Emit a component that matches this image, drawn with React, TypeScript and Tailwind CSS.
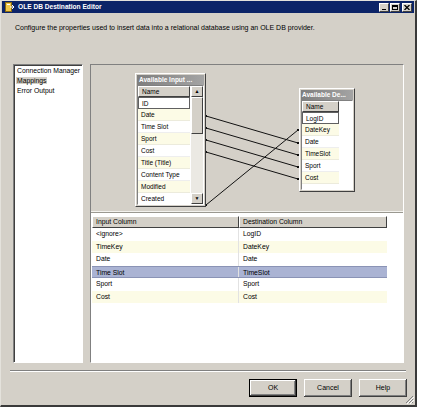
import React from "react";

const inputRows = ["ID", "Date", "Time Slot", "Sport", "Cost", "Title (Title)", "Content Type", "Modified", "Created"];
const destRows = ["LogID", "DateKey", "Date", "TimeSlot", "Sport", "Cost"];
const mappings = [
  ["<ignore>", "LogID"],
  ["TimeKey", "DateKey"],
  ["Date", "Date"],
  ["Time Slot", "TimeSlot"],
  ["Sport", "Sport"],
  ["Cost", "Cost"],
];

// lines in diagram coordinates
const links = [
  [115, 51, 207, 78],
  [115, 63, 207, 90],
  [115, 75, 207, 102],
  [115, 87, 207, 114],
  [115, 140, 207, 65],
];

const raised = "border border-t-white border-l-white border-r-[#404040] border-b-[#404040]";
const sunken = "border border-t-[#808080] border-l-[#808080] border-r-white border-b-white";

function WinButton({ label, isDefault }: { label: string; isDefault?: boolean }) {
  return (
    <div
      className={`flex h-[18px] w-[48px] items-center justify-center bg-[#d4d0c8] text-[7px] text-black ${
        isDefault ? "border border-black" : ""
      } shadow-[inset_-1px_-1px_#404040,inset_1px_1px_#ffffff,inset_-2px_-2px_#808080]`}
    >
      {label}
    </div>
  );
}

function ColumnRows({ rows, width }: { rows: string[]; width: number }) {
  return (
    <div className="flex flex-col" style={{ width }}>
      <div className={`h-[11px] shrink-0 bg-[#d4d0c8] pl-[3px] text-[6.5px] leading-[9px] ${raised}`}>Name</div>
      {rows.map((r, i) => (
        <div
          key={r}
          className={`h-[12px] shrink-0 whitespace-nowrap pl-[3px] text-[6.5px] leading-[11px] ${
            i === 0
              ? "border border-[#606060] bg-white"
              : i % 2 === 1
              ? "border-b border-[#ecebdc] bg-[#fcfbe6]"
              : "border-b border-[#eeeeee] bg-white"
          }`}
        >
          {r}
        </div>
      ))}
    </div>
  );
}

function Diagram() {
  return (
    <div className="relative h-[146px] shrink-0 bg-[#d4d0c8]">
      <svg className="absolute left-0 top-0" width="312" height="146">
        {links.map(([x1, y1, x2, y2], i) => (
          <g key={i}>
            <line x1={x1} y1={y1} x2={x2} y2={y2} stroke="#111" strokeWidth="1" />
            <rect x={x1 - 1} y={y1 - 1} width="2" height="2" fill="#111" />
            <rect x={x2 - 1} y={y2 - 1} width="2" height="2" fill="#111" />
          </g>
        ))}
      </svg>

      {/* Available Input Columns */}
      <div className={`absolute left-[44px] top-[8px] flex h-[134px] w-[71px] flex-col bg-[#d4d0c8] p-[1px] ${raised}`}>
        <div className="h-[10px] shrink-0 truncate bg-gradient-to-r from-[#7e7e7e] to-[#a4a4a4] pl-[2px] text-[6.5px] font-bold leading-[10px] text-white">
          Available Input ...
        </div>
        <div className={`flex min-h-0 flex-1 gap-[1px] overflow-hidden bg-white ${sunken}`}>
          <ColumnRows rows={inputRows} width={52} />
          <div className="flex w-[12px] flex-col bg-[#ebe9e3]">
            <div className={`flex h-[11px] items-center justify-center bg-[#d4d0c8] text-[5px] ${raised}`}>▲</div>
            <div className={`h-[37px] bg-[#d4d0c8] ${raised}`} />
            <div className="flex-1" />
            <div className={`flex h-[11px] items-center justify-center bg-[#d4d0c8] text-[5px] ${raised}`}>▼</div>
          </div>
        </div>
      </div>

      {/* Available Destination Columns */}
      <div className={`absolute left-[208px] top-[23px] flex h-[104px] w-[56px] flex-col bg-[#d4d0c8] p-[1px] ${raised}`}>
        <div className="h-[10px] shrink-0 truncate bg-gradient-to-r from-[#7e7e7e] to-[#a4a4a4] pl-[1px] text-[6.5px] font-bold leading-[10px] text-white">
          Available De...
        </div>
        <div className={`flex min-h-0 flex-1 overflow-hidden bg-white ${sunken}`}>
          <ColumnRows rows={destRows} width={37} />
        </div>
      </div>
    </div>
  );
}

function MappingTable() {
  return (
    <div className="flex-1 bg-white pl-[1px] pt-[3px]">
      <div className="flex">
        <div className={`h-[12px] w-[147px] bg-[#d4d0c8] pl-[3px] text-[6.8px] leading-[10px] ${raised}`}>Input Column</div>
        <div className={`h-[12px] w-[148px] bg-[#d4d0c8] pl-[3px] text-[6.8px] leading-[10px] ${raised}`}>Destination Column</div>
      </div>
      {mappings.map(([a, b], i) => {
        const bg = i === 3 ? "bg-[#aab3d3]" : i % 2 === 1 || i === 5 ? "bg-[#fcfbe6]" : "bg-white";
        return (
          <div key={a} className={`flex h-[12.5px] w-[295px] ${bg} ${i === 3 ? "border-y border-[#8a93b5]" : ""}`}>
            <div className="w-[147px] border-r border-[#e2e2e2] pl-[4px] text-[6.8px] leading-[12px]">{a}</div>
            <div className="w-[148px] pl-[4px] text-[6.8px] leading-[12px]">{b}</div>
          </div>
        );
      })}
    </div>
  );
}

export default function App() {
  return (
    <div className="h-[411px] w-[421px] overflow-hidden bg-white font-['Liberation_Sans',Arial,sans-serif] text-black">
      <div className="relative flex h-[407px] w-[417px] flex-col border-b-2 border-l border-r-2 border-t border-b-[#3a3a3a] border-l-[#e4e2dc] border-r-[#3a3a3a] border-t-[#e4e2dc] bg-[#d4d0c8]">
        {/* title bar */}
        <div className="mx-[1px] flex h-[12px] shrink-0 items-center bg-[#0c2468] pl-[3px] pr-[2px]">
          <svg width="9" height="10" viewBox="0 0 9 10">
            <rect x="0.5" y="0.5" width="6" height="9" fill="#f1c94a" stroke="#8a6a10" />
            <rect x="2" y="2" width="3" height="1" fill="#fff" />
            <path d="M5 5 L9 5 L7 3 M9 5 L7 7" stroke="#fff" strokeWidth="1" fill="none" />
          </svg>
          <span className="ml-[4px] text-[6.6px] font-bold leading-none text-white">OLE DB Destination Editor</span>
          <div className="ml-auto flex gap-[1px]">
            <div className={`flex h-[9px] w-[10px] items-end justify-center bg-[#d4d0c8] pb-[1px] ${raised}`}>
              <div className="h-[1px] w-[4px] bg-black" />
            </div>
            <div className={`flex h-[9px] w-[10px] items-center justify-center bg-[#d4d0c8] ${raised}`}>
              <div className="h-[5px] w-[6px] border border-t-2 border-black" />
            </div>
            <div className={`ml-[1px] flex h-[9px] w-[10px] items-center justify-center bg-[#d4d0c8] ${raised}`}>
              <svg width="6" height="5" viewBox="0 0 6 5">
                <path d="M0.5 0 L5.5 5 M5.5 0 L0.5 5" stroke="#000" strokeWidth="1.3" />
              </svg>
            </div>
          </div>
        </div>

        {/* description */}
        <div className="ml-[14px] mt-[10px] text-[7px] leading-[10px]">
          Configure the properties used to insert data into a relational database using an OLE DB provider.
        </div>

        {/* main */}
        <div className="ml-[12px] mt-[31px] flex h-[299px] gap-[7px]">
          <div className={`w-[70px] overflow-hidden whitespace-nowrap bg-white pl-[2px] pt-[1px] text-[6.8px] leading-[10px] shadow-[inset_1px_1px_#404040] ${sunken}`}>
            <div className="pl-[1px]">Connection Manager</div>
            <div>
              <span className="bg-[#d4d0c8] px-[1px]">Mappings</span>
            </div>
            <div className="pl-[1px]">Error Output</div>
          </div>
          <div className={`flex w-[314px] flex-col ${sunken}`}>
            <Diagram />
            <div className="h-[2px] shrink-0 border-b border-t border-b-[#9a9890] border-t-[#f4f3ef]" />
            <MappingTable />
          </div>
        </div>

        {/* separator */}
        <div className="mx-[9px] mt-[7px] h-[2px] border-b border-t border-b-white border-t-[#808080]" />

        {/* buttons */}
        <div className="mr-[8px] mt-[7px] flex justify-end gap-[7px]">
          <WinButton label="OK" isDefault />
          <WinButton label="Cancel" />
          <WinButton label="Help" />
        </div>

        {/* size grip */}
        <svg className="absolute bottom-[1px] right-[1px]" width="9" height="9" viewBox="0 0 9 9">
          <path d="M8 1 L1 8 M8 4 L4 8 M8 7 L7 8" stroke="#808080" strokeWidth="1" />
          <path d="M9 2 L2 9 M9 5 L5 9" stroke="#fff" strokeWidth="1" />
        </svg>
      </div>
    </div>
  );
}
